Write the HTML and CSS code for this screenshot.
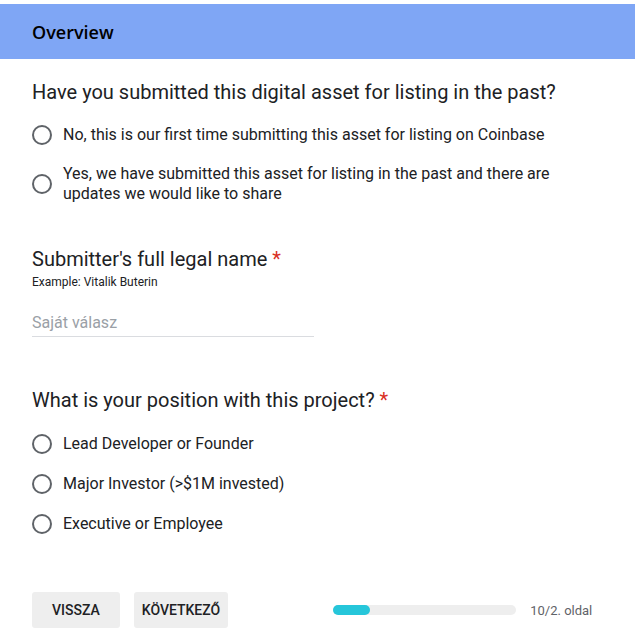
FILE: index.html
```html
<!DOCTYPE html>
<html lang="hu">
<head>
<meta charset="utf-8">
<link rel="stylesheet" href="styles.css">
</head>
<body>
<header class="section-head"><h1 class="section-title">Overview</h1></header>
<main class="form">
  <section class="question q1">
    <h2 class="q-title">Have you submitted this digital asset for listing in the past?</h2>
    <div class="options">
      <label class="option"><span class="radio"></span><span class="opt-text">No, this is our first time submitting this asset for listing on Coinbase</span></label>
      <label class="option"><span class="radio"></span><span class="opt-text">Yes, we have submitted this asset for listing in the past and there are updates we would like to share</span></label>
    </div>
  </section>
  <section class="question q2">
    <h2 class="q-title">Submitter's full legal name <span class="req">*</span></h2>
    <div class="q-help">Example: Vitalik Buterin</div>
    <div class="text-input"><span class="placeholder">Saját válasz</span></div>
  </section>
  <section class="question q3">
    <h2 class="q-title">What is your position with this project? <span class="req">*</span></h2>
    <div class="options">
      <label class="option"><span class="radio"></span><span class="opt-text">Lead Developer or Founder</span></label>
      <label class="option"><span class="radio"></span><span class="opt-text">Major Investor (&gt;$1M invested)</span></label>
      <label class="option"><span class="radio"></span><span class="opt-text">Executive or Employee</span></label>
    </div>
  </section>
  <footer class="nav">
    <button class="btn">VISSZA</button>
    <button class="btn">KÖVETKEZŐ</button>
    <div class="progress"><div class="progress-fill"></div></div>
    <span class="page-count">10/2. oldal</span>
  </footer>
</main>
</body>
</html>
```
FILE: styles.css
```css
html, body { margin: 0; padding: 0; background: #fff; }
body { padding-top: 4px; font-family: Roboto, "Noto Sans", sans-serif; color: #202124; }
.section-head { background: #7fa6f5; height: 55px; display: flex; align-items: center; padding: 0 32px; }
.section-title { margin: 0; font-family: "Open Sans", "Noto Sans", sans-serif; font-size: 18px; font-weight: 600; color: #000; }
.form { padding: 0 32px; }
.q1 { padding-top: 19px; }
.q-title { margin: 0; font-size: 20px; font-weight: 400; line-height: 28px; color: #202124; }
.req { color: #d93025; }
.options { display: flex; flex-direction: column; }
.q1 .options { margin-top: 15px; gap: 15px; }
.option { display: flex; align-items: center; gap: 11px; min-height: 28px; }
.radio { flex: none; width: 16px; height: 16px; border: 2px solid #5f6368; border-radius: 50%; }
.opt-text { font-size: 16px; line-height: 20px; color: #202124; max-width: 500px; }
.q2 { padding-top: 41px; }
.q-help { font-size: 12px; line-height: 16px; margin-top: 1px; color: #202124; }
.text-input { width: 282px; margin-top: 23px; border-bottom: 1px solid #dadce0; padding-bottom: 3px; }
.placeholder { font-size: 16px; line-height: 20px; color: #9aa0a6; }
.q3 { padding-top: 49px; }
.q3 .options { margin-top: 16px; gap: 12px; }
.nav { display: flex; align-items: center; margin-top: 54px; }
.btn { font-family: Roboto, sans-serif; font-size: 14px; font-weight: 500; color: #202124; background: #eeeeee; border: none; border-radius: 3px; height: 36px; padding: 0 20px; margin-right: 14px; }
.btn + .btn { padding: 0 8px; }
.progress { margin-left: 91px; width: 183px; height: 10px; background: #eeeeee; border-radius: 5px; }
.progress-fill { width: 37px; height: 10px; background: #26c6da; border-radius: 5px; }
.page-count { margin-left: 14px; font-size: 13px; color: #5f6368; }
```
